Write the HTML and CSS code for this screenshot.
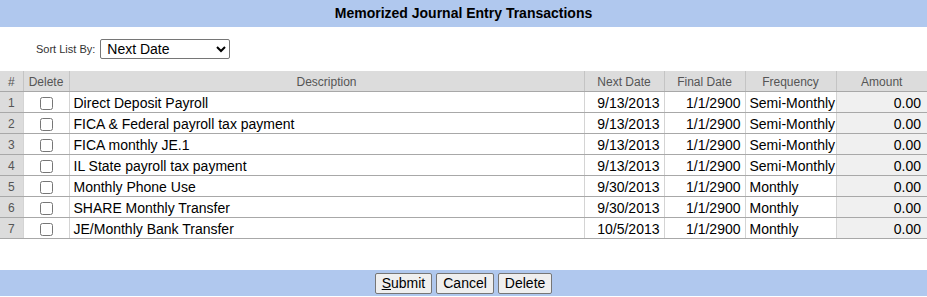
FILE: index.html
```html
<!DOCTYPE html>
<html>
<head>
<meta charset="utf-8">
<link rel="stylesheet" href="styles.css">
</head>
<body>
<div class="titlebar">Memorized Journal Entry Transactions</div>
<div class="sortrow">
  <label class="sortlabel" for="sort">Sort List By:</label>
  <select id="sort" class="sortsel"><option>Next Date</option></select>
</div>
<table class="grid">
  <colgroup>
    <col class="c-num"><col class="c-del"><col class="c-desc"><col class="c-next"><col class="c-final"><col class="c-freq"><col class="c-amt">
  </colgroup>
  <thead>
    <tr><th>#</th><th>Delete</th><th>Description</th><th>Next Date</th><th>Final Date</th><th>Frequency</th><th>Amount</th></tr>
  </thead>
  <tbody>
    <tr><td class="num">1</td><td class="del"><input type="checkbox"></td><td class="desc">Direct Deposit Payroll</td><td class="r">9/13/2013</td><td class="r">1/1/2900</td><td class="freq">Semi-Monthly</td><td class="amt">0.00</td></tr>
    <tr><td class="num">2</td><td class="del"><input type="checkbox"></td><td class="desc">FICA &amp; Federal payroll tax payment</td><td class="r">9/13/2013</td><td class="r">1/1/2900</td><td class="freq">Semi-Monthly</td><td class="amt">0.00</td></tr>
    <tr><td class="num">3</td><td class="del"><input type="checkbox"></td><td class="desc">FICA monthly JE.1</td><td class="r">9/13/2013</td><td class="r">1/1/2900</td><td class="freq">Semi-Monthly</td><td class="amt">0.00</td></tr>
    <tr><td class="num">4</td><td class="del"><input type="checkbox"></td><td class="desc">IL State payroll tax payment</td><td class="r">9/13/2013</td><td class="r">1/1/2900</td><td class="freq">Semi-Monthly</td><td class="amt">0.00</td></tr>
    <tr><td class="num">5</td><td class="del"><input type="checkbox"></td><td class="desc">Monthly Phone Use</td><td class="r">9/30/2013</td><td class="r">1/1/2900</td><td class="freq">Monthly</td><td class="amt">0.00</td></tr>
    <tr><td class="num">6</td><td class="del"><input type="checkbox"></td><td class="desc">SHARE Monthly Transfer</td><td class="r">9/30/2013</td><td class="r">1/1/2900</td><td class="freq">Monthly</td><td class="amt">0.00</td></tr>
    <tr><td class="num">7</td><td class="del"><input type="checkbox"></td><td class="desc">JE/Monthly Bank Transfer</td><td class="r">10/5/2013</td><td class="r">1/1/2900</td><td class="freq">Monthly</td><td class="amt">0.00</td></tr>
  </tbody>
</table>
<div class="footbar">
  <button class="btn"><u>S</u>ubmit</button>
  <button class="btn">Cancel</button>
  <button class="btn">Delete</button>
</div>
</body>
</html>
```
FILE: styles.css
```css
html, body {
  margin: 0;
  padding: 0;
  background: #ffffff;
  font-family: "Liberation Sans", Arial, sans-serif;
  color: #000;
}
.titlebar {
  height: 27px;
  line-height: 27px;
  background: #b0c8ee;
  text-align: center;
  font-weight: bold;
  font-size: 14px;
}
.sortrow {
  display: flex;
  align-items: center;
  height: 44px;
  padding-left: 36px;
  gap: 5px;
}
.sortlabel {
  font-size: 11px;
  color: #333;
}
.sortsel {
  width: 130px;
  height: 20px;
  font-family: "Liberation Sans", Arial, sans-serif;
  font-size: 14px;
  border: 1px solid #767676;
  border-radius: 2px;
  background: #fff;
  color: #000;
  padding: 0 2px;
}
.grid {
  width: 927px;
  border-collapse: collapse;
  table-layout: fixed;
  font-size: 14px;
}
.c-num { width: 23px; }
.c-del { width: 46px; }
.c-desc { width: 515px; }
.c-next { width: 80px; }
.c-final { width: 81px; }
.c-freq { width: 91px; }
.c-amt { width: 91px; }
.grid th {
  height: 19px;
  padding: 1px 0 0;
  background: #dcdcdc;
  color: #555;
  font-weight: normal;
  font-size: 12px;
  border-left: 1px solid #c4c4c4;
  border-bottom: 1px solid #a8a8a8;
}
.grid th:first-child { border-left: none; }
.grid td {
  height: 19px;
  padding: 1px 4px 0;
  border-left: 1px solid #d4d4d4;
  border-bottom: 1px solid #a8a8a8;
  white-space: nowrap;
}
.grid td:first-child { border-left: none; }
.grid td.num {
  background: #dcdcdc;
  color: #555;
  font-size: 12px;
  text-align: center;
  padding: 1px 0 0;
}
.grid td.del {
  text-align: center;
  padding: 0;
}
.grid td.del input {
  margin: 0;
  width: 13px;
  height: 13px;
  vertical-align: middle;
}
.grid td.r { text-align: right; }
.grid td.amt {
  text-align: right;
  background: #f0f0f0;
  padding-right: 6px;
}
.footbar {
  margin-top: 31px;
  height: 26px;
  background: #b0c8ee;
  display: flex;
  justify-content: center;
  align-items: center;
  gap: 4px;
}
.btn {
  height: 21px;
  font-family: "Liberation Sans", Arial, sans-serif;
  font-size: 14px;
  padding: 0 6px;
  background: #efefef;
  border: 1px solid #767676;
  border-radius: 2px;
  color: #000;
}
```
